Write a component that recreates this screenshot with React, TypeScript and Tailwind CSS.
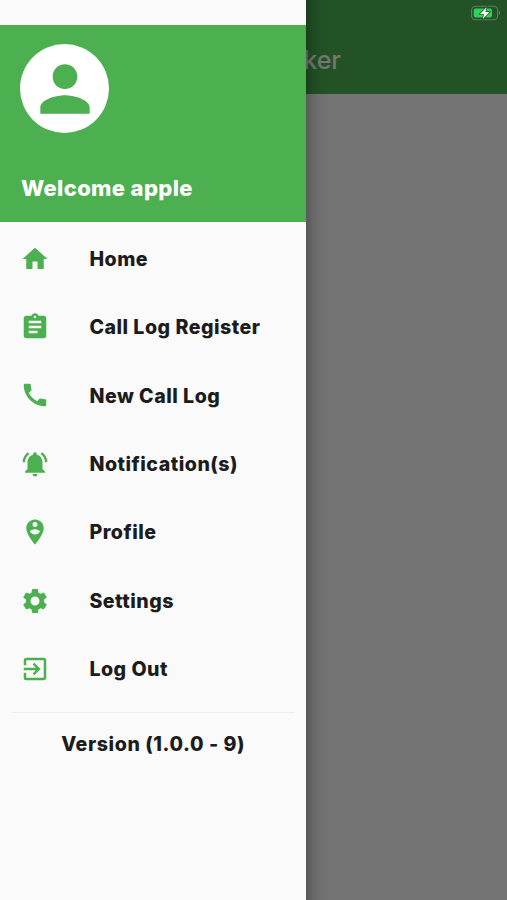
import {
  MdAssignment,
  MdCall,
  MdExitToApp,
  MdHome,
  MdNotificationsActive,
  MdPerson,
  MdPersonPinCircle,
  MdSettings,
} from "react-icons/md";

const menuItems = [
  { label: "Home", icon: MdHome },
  { label: "Call Log Register", icon: MdAssignment },
  { label: "New Call Log", icon: MdCall },
  { label: "Notification(s)", icon: MdNotificationsActive },
  { label: "Profile", icon: MdPersonPinCircle },
  { label: "Settings", icon: MdSettings },
  { label: "Log Out", icon: MdExitToApp },
];

function BatteryIcon() {
  return (
    <svg width="31" height="16" viewBox="0 0 31 16" fill="none">
      <rect x="0.6" y="1.2" width="26" height="13.6" rx="4" stroke="#5f7f61" strokeWidth="1.1" />
      <path d="M28 5.8c1.5.5 1.5 3.9 0 4.4z" fill="#5f7f61" />
      <rect x="2.8" y="3.4" width="18.2" height="9.2" rx="2" fill="#30d158" />
      <path
        d="M15.6 2.2 9 8.9h4l-1.2 5.2L18.6 7h-4.2z"
        fill="#fff"
        stroke="#235226"
        strokeWidth="1.4"
        paintOrder="stroke"
      />
    </svg>
  );
}

function Drawer() {
  return (
    <aside className="absolute -inset-y-6 left-0 w-[306.4px] bg-[#fafafa] pt-[49px] shadow-[0_0_18px_rgba(0,0,0,0.45)]">
      <div className="h-[197px] bg-[#4caf50] pl-5 pt-[19px]">
        <div className="flex size-[89px] items-center justify-center rounded-full bg-white">
          <MdPerson className="size-[74px] text-[#4caf50]" />
        </div>
        <h2 className="mt-10 pl-px text-[22px] font-extrabold leading-[30px] tracking-[0.35px] text-white">
          Welcome apple
        </h2>
      </div>

      <nav className="pt-[2.5px]">
        {menuItems.map(({ label, icon: Icon }) => (
          <a key={label} className="flex h-[68.4px] items-center pl-5">
            <Icon className="size-[30px] shrink-0 text-[#4caf50]" />
            <span className="ml-[39.4px] pt-[1.5px] text-[19.6px] font-extrabold tracking-[0.5px]">
              {label}
            </span>
          </a>
        ))}
      </nav>

      <div className="mx-3 mt-[9px] h-px bg-[#ededed]" />
      <p className="mt-[17px] text-center text-[19.6px] font-extrabold leading-7 tracking-[0.58px]">
        Version (1.0.0 - 9)
      </p>
    </aside>
  );
}

export default function App() {
  return (
    <div className="relative h-[900px] w-[507px] overflow-hidden bg-[#737373] font-['Inter',sans-serif] text-[#1c1c1c]">
      <header className="flex h-[94px] flex-col items-end bg-[#235226]">
        <div className="pr-[5px] pt-[5px]">
          <BatteryIcon />
        </div>
        <h1 className="mr-[166px] mt-[22px] text-[25px] font-medium leading-[34px] text-[#737973]">
          Call Tracker
        </h1>
      </header>
      <Drawer />
    </div>
  );
}
